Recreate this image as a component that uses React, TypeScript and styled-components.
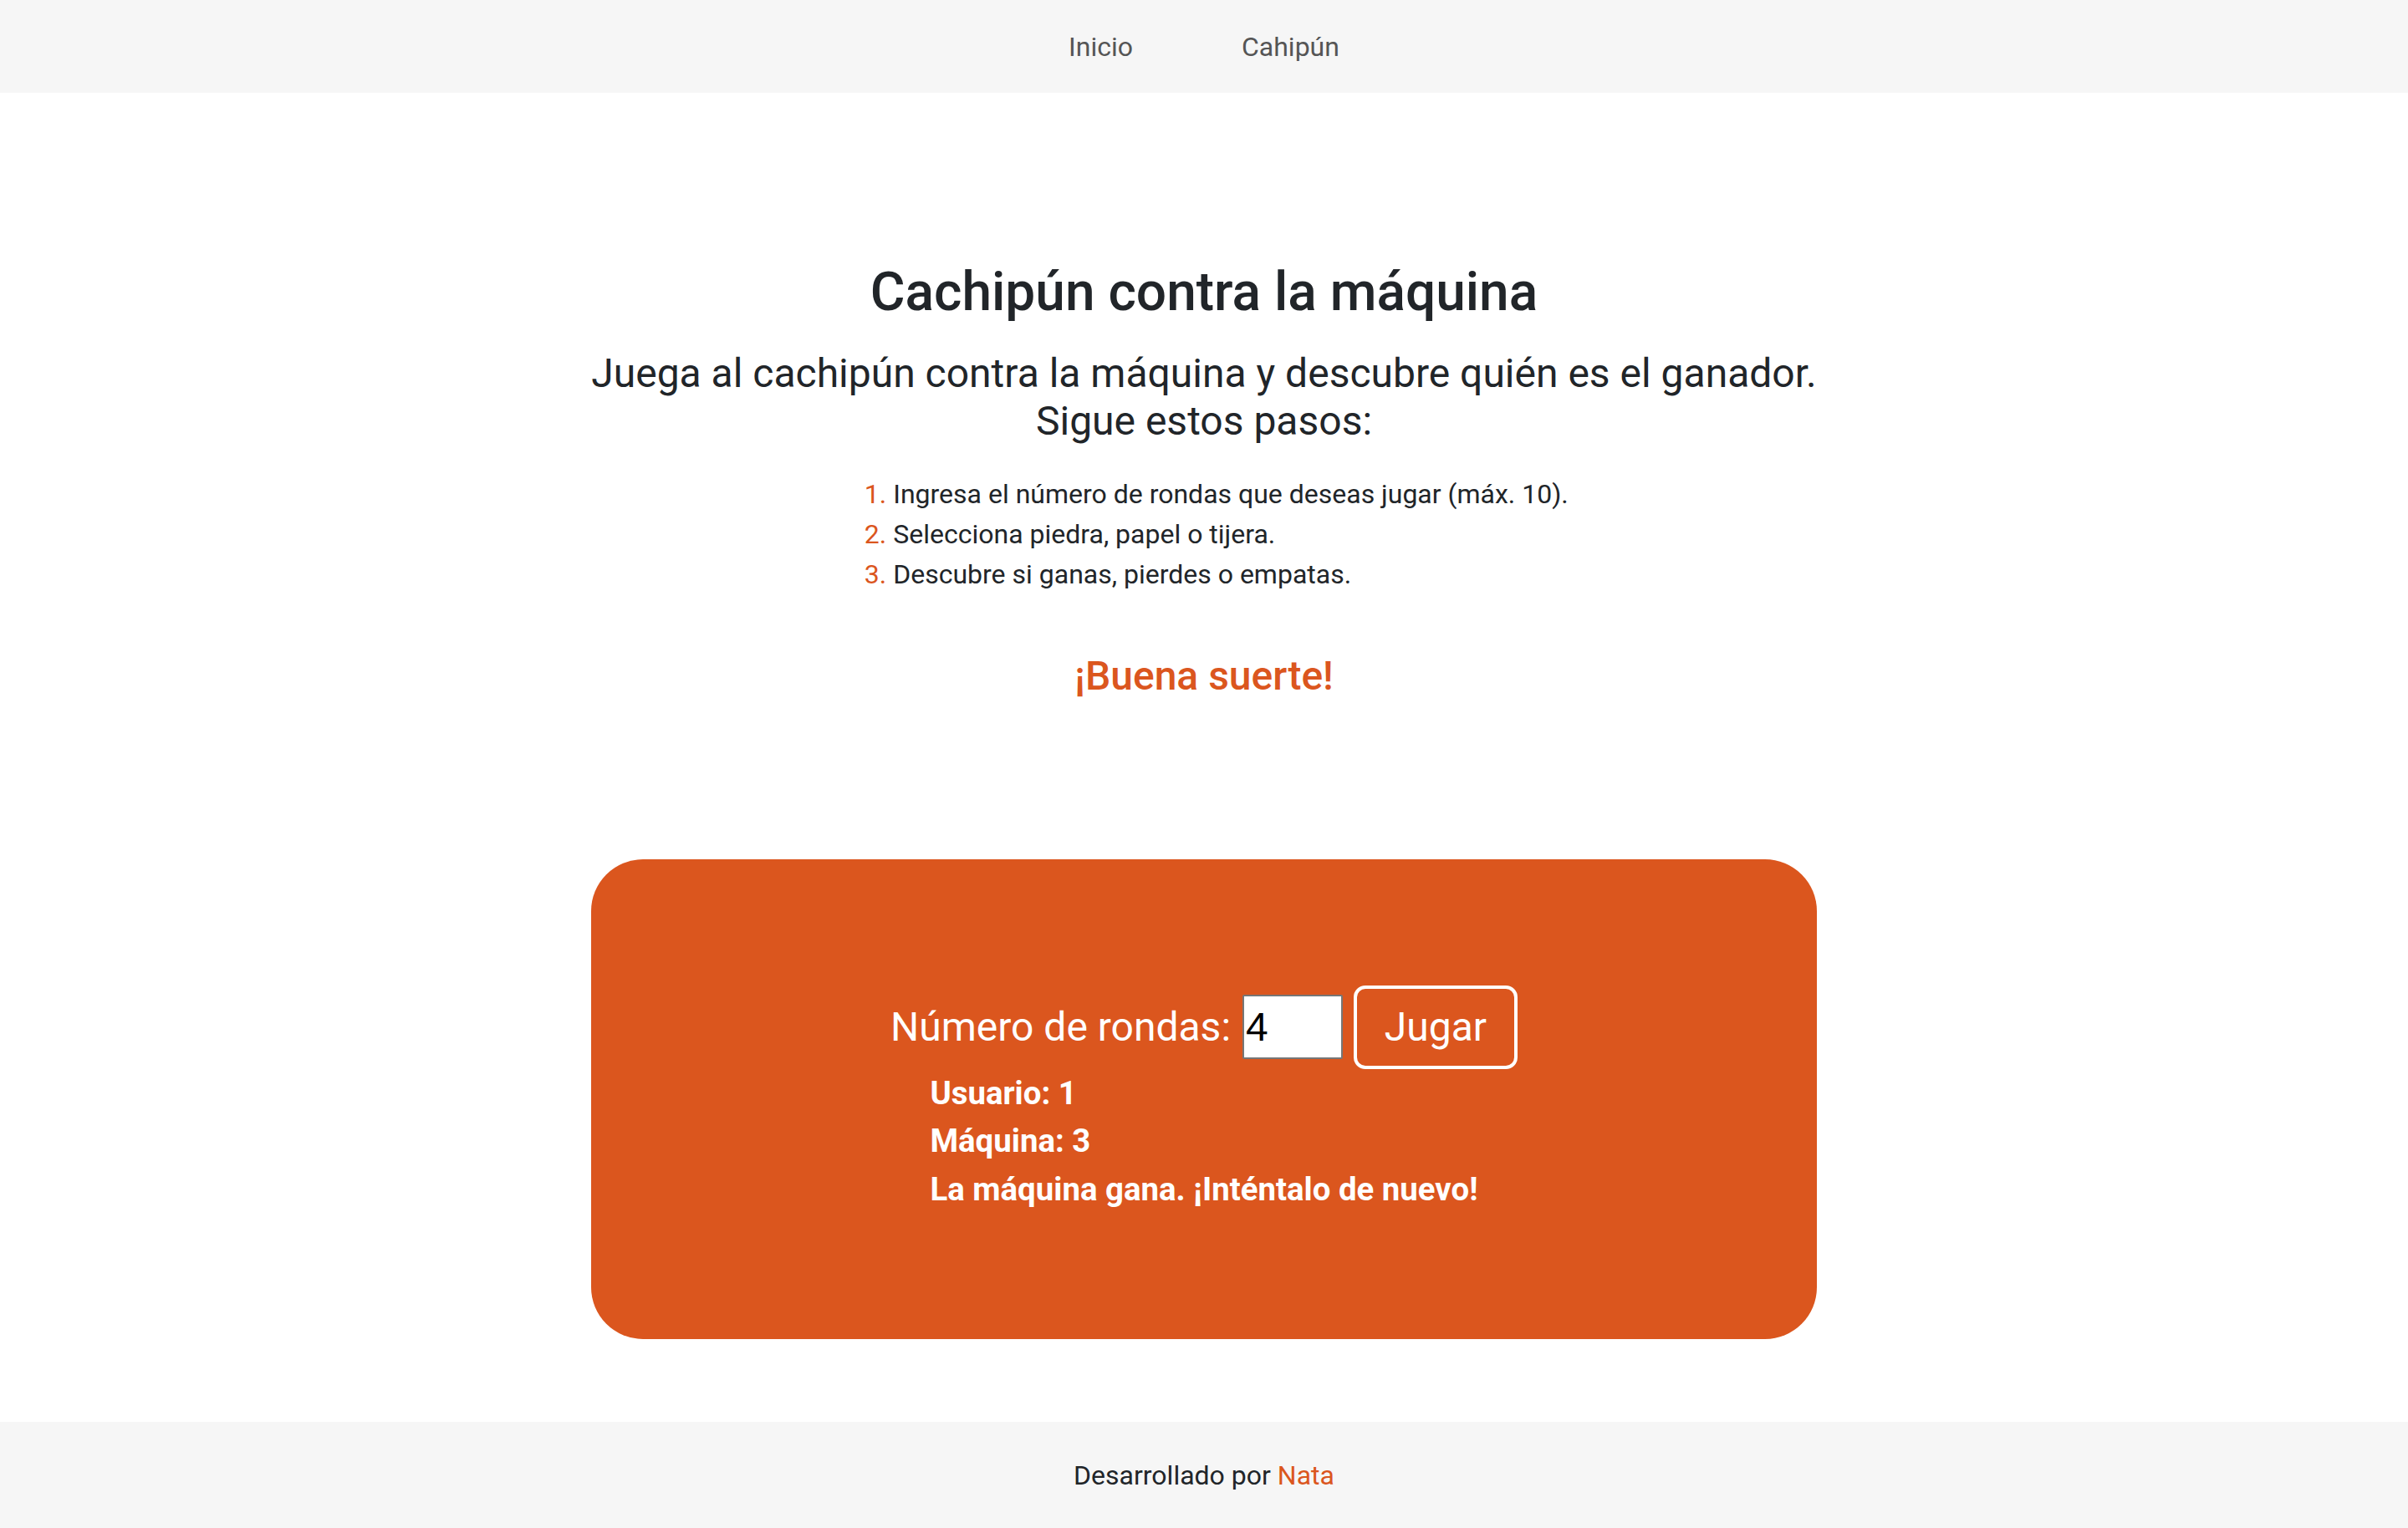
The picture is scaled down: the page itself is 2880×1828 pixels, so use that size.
import React from "react";
import styled, { createGlobalStyle } from "styled-components";

const ORANGE = "#db561e";

const GlobalStyle = createGlobalStyle`
  html, body {
    margin: 0;
    padding: 0;
    background: #ffffff;
  }
  body {
    font-family: Roboto, "Liberation Sans", Arial, sans-serif;
    color: #212529;
  }
  * { box-sizing: border-box; }
`;

const Page = styled.div`
  display: flex;
  flex-direction: column;
  min-height: 1828px;
`;

const Nav = styled.nav`
  display: flex;
  justify-content: center;
  align-items: center;
  gap: 130px;
  height: 111px;
  background: #f6f6f6;
`;

const NavLink = styled.a`
  font-size: 32px;
  line-height: 48px;
  color: #555555;
  text-decoration: none;
  cursor: pointer;
`;

const Main = styled.main`
  flex: 1;
  display: flex;
  flex-direction: column;
  align-items: center;
  padding: 201px 0 97px;
`;

const Intro = styled.section`
  display: flex;
  flex-direction: column;
  align-items: center;
  text-align: center;
`;

const Title = styled.h1`
  margin: 0;
  font-size: 64px;
  font-weight: 500;
  line-height: 1.2;
  color: #212529;
`;

const Lead = styled.p`
  margin: 29px 0 0;
  font-size: 48px;
  font-weight: 400;
  line-height: 1.2;
  color: #212529;
`;

const Steps = styled.ol`
  display: inline-block;
  margin: 34px 0 0;
  padding-left: 64px;
  text-align: left;
  font-size: 32px;
  line-height: 48px;
  color: #212529;

  li::marker {
    color: ${ORANGE};
  }
`;

const Luck = styled.p`
  margin: 69px 0 0;
  font-size: 48px;
  font-weight: 500;
  line-height: 1.2;
  color: ${ORANGE};
`;

const GameCard = styled.section`
  margin-top: 190px;
  width: 1466px;
  padding: 151px 0;
  border-radius: 62px;
  background: ${ORANGE};
  display: flex;
  flex-direction: column;
  align-items: center;
  color: #ffffff;
`;

const RoundsForm = styled.form`
  display: flex;
  align-items: center;
  height: 100px;
`;

const Label = styled.label`
  font-size: 48px;
  line-height: 1.2;
  color: #ffffff;
  margin-right: 14px;
`;

const RoundsInput = styled.input`
  width: 120px;
  height: 77px;
  padding: 0 2px;
  border: 2px solid #767676;
  border-radius: 2px;
  background: #ffffff;
  font-family: "Liberation Sans", Arial, sans-serif;
  font-size: 48px;
  color: #000000;
  outline: none;
`;

const PlayButton = styled.button`
  margin-left: 13px;
  width: 196px;
  height: 100px;
  border: 4px solid #ffffff;
  border-radius: 14px;
  background: transparent;
  color: #ffffff;
  font-family: Roboto, sans-serif;
  font-size: 48px;
  line-height: 1;
  cursor: pointer;
`;

const Results = styled.div`
  display: flex;
  flex-direction: column;
  align-items: flex-start;
`;

const Result = styled.p`
  margin: 0;
  font-size: 38.4px;
  font-weight: 700;
  line-height: 57.6px;
  color: #ffffff;
`;

const Footer = styled.footer`
  background: #f6f6f6;
  padding: 40px 0 39px;
  text-align: center;
  font-size: 32px;
  line-height: 48px;
  color: #212529;
`;

const Author = styled.span`
  color: ${ORANGE};
`;

export default function App() {
  return (
    <Page>
      <GlobalStyle />
      <Nav>
        <NavLink>Inicio</NavLink>
        <NavLink>Cahipún</NavLink>
      </Nav>
      <Main>
        <Intro>
          <Title>Cachipún contra la máquina</Title>
          <Lead>
            Juega al cachipún contra la máquina y descubre quién es el ganador.
            <br />
            Sigue estos pasos:
          </Lead>
          <Steps>
            <li>Ingresa el número de rondas que deseas jugar (máx. 10).</li>
            <li>Selecciona piedra, papel o tijera.</li>
            <li>Descubre si ganas, pierdes o empatas.</li>
          </Steps>
          <Luck>¡Buena suerte!</Luck>
        </Intro>
        <GameCard>
          <RoundsForm onSubmit={(e) => e.preventDefault()}>
            <Label htmlFor="rondas">Número de rondas:</Label>
            <RoundsInput id="rondas" type="text" defaultValue="4" />
            <PlayButton type="submit">Jugar</PlayButton>
          </RoundsForm>
          <Results>
            <Result>Usuario: 1</Result>
            <Result>Máquina: 3</Result>
            <Result>La máquina gana. ¡Inténtalo de nuevo!</Result>
          </Results>
        </GameCard>
      </Main>
      <Footer>
        Desarrollado por <Author>Nata</Author>
      </Footer>
    </Page>
  );
}
